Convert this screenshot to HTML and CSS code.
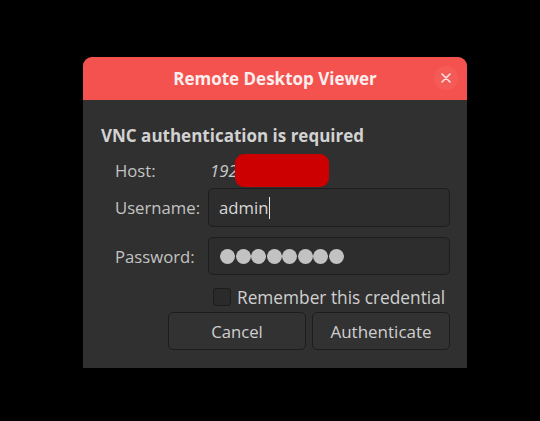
FILE: index.html
```html
<!DOCTYPE html>
<html>
<head>
<meta charset="utf-8">
<link rel="stylesheet" href="styles.css">
</head>
<body>
<div class="dialog">
  <div class="header">
    <span class="title">Remote Desktop Viewer</span>
    <span class="close">
      <svg width="10" height="10" viewBox="0 0 10 10"><path d="M1 1L9 9M9 1L1 9" stroke="#fde3e2" stroke-width="1.6" stroke-linecap="round"/></svg>
    </span>
  </div>
  <div class="content">
    <div class="heading">VNC authentication is required</div>
    <div class="form">
      <div class="row host-row">
        <span class="label">Host:</span>
        <span class="host"><span class="ip">192</span><span class="redact"></span></span>
      </div>
      <div class="row user-row">
        <span class="label">Username:</span>
        <div class="entry"><span class="value">admin</span><span class="caret"></span></div>
      </div>
      <div class="row pass-row">
        <span class="label">Password:</span>
        <div class="entry"><span class="dots"><i></i><i></i><i></i><i></i><i></i><i></i><i></i><i></i></span></div>
      </div>
      <div class="check-row">
        <span class="checkbox"></span>
        <span class="check-label">Remember this credential</span>
      </div>
      <div class="buttons">
        <button class="btn">Cancel</button>
        <button class="btn">Authenticate</button>
      </div>
    </div>
  </div>
</div>
</body>
</html>
```
FILE: styles.css
```css
html, body {
  margin: 0;
  background: #000;
}
body {
  padding: 57px 0 0 83px;
  font-family: "Open Sans", "Noto Sans", sans-serif;
}
.dialog {
  width: 384px;
  height: 311px;
  background: #303030;
  border-radius: 9px 9px 0 0;
  overflow: hidden;
  display: flex;
  flex-direction: column;
}
.header {
  height: 43px;
  background: #f4524e;
  position: relative;
  display: flex;
  align-items: center;
  justify-content: center;
}
.title {
  color: #fbeeee;
  font-weight: 700;
  font-size: 17px;
  margin-top: -1px;
}
.close {
  position: absolute;
  right: 9px;
  top: 9px;
  width: 24px;
  height: 24px;
  border-radius: 50%;
  background: #f55b56;
  display: flex;
  align-items: center;
  justify-content: center;
}
.content {
  padding: 25px 17px 0 18px;
}
.heading {
  color: #d2d2d2;
  font-weight: 700;
  font-size: 17px;
  line-height: 20px;
  margin-top: 1px;
}
.form {
  margin-top: 7px;
}
.row {
  display: flex;
  align-items: center;
}
.label {
  width: 107px;
  padding-left: 14px;
  box-sizing: border-box;
  color: #c3c3c3;
  font-size: 16.7px;
}
.host-row {
  height: 35px;
}
.host {
  display: flex;
  align-items: center;
  padding-left: 2px;
}
.ip {
  color: #c8c8c8;
  font-style: italic;
  font-size: 16.7px;
}
.redact {
  width: 94px;
  height: 33px;
  background: #cc0000;
  border-radius: 9px;
  margin-left: -3px;
  margin-top: -1px;
}
.entry {
  flex: 1;
  box-sizing: border-box;
  height: 39px;
  background: #2d2d2d;
  border: 1px solid #1d1d1d;
  border-radius: 5px;
  display: flex;
  align-items: center;
  padding-left: 10px;
}
.pass-row {
  margin-top: 10px;
}
.pass-row .entry {
  height: 38px;
}
.value {
  color: #d8d8d8;
  font-size: 16.7px;
}
.caret {
  width: 1px;
  height: 22px;
  background: #e6e6e6;
  margin-left: 1px;
}
.dots {
  display: flex;
  gap: 0.5px;
  padding-left: 1px;
}
.dots i {
  width: 15px;
  height: 15px;
  border-radius: 50%;
  background: #c2c2c2;
}
.check-row {
  margin-top: 13px;
  margin-left: 112px;
  display: flex;
  align-items: center;
  height: 18px;
}
.checkbox {
  width: 16px;
  height: 16px;
  border: 1px solid #1c1c1c;
  background: #2a2a2a;
  border-radius: 3px;
}
.check-label {
  color: #d0d0d0;
  font-size: 17.3px;
  margin-left: 6px;
}
.buttons {
  margin-top: 6px;
  display: flex;
  justify-content: flex-end;
  gap: 6px;
}
.btn {
  width: 138px;
  height: 38px;
  background: #323232;
  border: 1px solid #1d1d1d;
  border-radius: 5px;
  color: #cfcfcf;
  font-family: inherit;
  font-size: 16.7px;
  padding: 0;
}
.btn + .btn {
  font-size: 17px;
}
```
